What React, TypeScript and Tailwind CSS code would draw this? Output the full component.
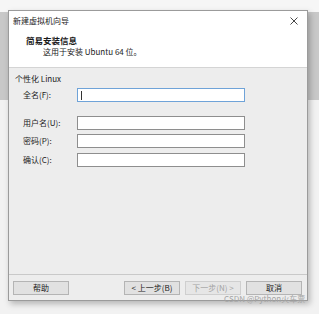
export default function App() {
  const fields = [
    { label: "用户名(U):", mt: "mt-[14px]" },
    { label: "密码(P):", mt: "mt-[4px]" },
    { label: "确认(C):", mt: "mt-[5px]" },
  ];

  return (
    <div
      className="relative w-[319px] h-[314px] overflow-hidden pt-[10px] pl-[8px] bg-[linear-gradient(to_bottom,#f6f6f6_12px,#c8c8c8_12px,#c8c8c8_100px,#f2f2f2_100px)] text-[#1b1b1b]"
      style={{ fontFamily: '"Noto Sans CJK SC", "Noto Sans", sans-serif' }}
    >
      {/* dialog */}
      <div className="w-[300px] h-[291px] flex flex-col border border-[#9b9b9b] bg-[#ededed] shadow-[2px_3px_6px_rgba(0,0,0,0.25)]">
        {/* title + header */}
        <div className="h-[57px] bg-white border-b border-[#d4d4d4] flex flex-col">
          <div className="h-[19px] flex items-center justify-between pl-[4px] pr-[9px]">
            <span className="text-[8px] leading-[10px]">新建虚拟机向导</span>
            <svg width="8" height="8" viewBox="0 0 8 8">
              <path d="M0.5 0.5L7.5 7.5M7.5 0.5L0.5 7.5" stroke="#333" strokeWidth="0.9" />
            </svg>
          </div>
          <div className="pl-[17px] mt-[5px] text-[8.5px] leading-[10px] font-bold">简易安装信息</div>
          <div className="pl-[34px] mt-[2px] text-[8px] leading-[10px]">这用于安装 Ubuntu 64 位。</div>
        </div>

        {/* body */}
        <div className="flex-1 flex flex-col">
          <div className="pl-[6px] mt-[6px] text-[8px] leading-[10px]">个性化 Linux</div>
          <div className="flex items-center mt-[4px]">
            <span className="w-[68px] pl-[14px] text-[8px] leading-[10px]">全名(F):</span>
            <div className="w-[168px] h-[14px] bg-white border border-[#6fa3d8] flex items-center pl-[3px]">
              <div className="w-px h-[9px] bg-[#333]" />
            </div>
          </div>
          {fields.map((f) => (
            <div key={f.label} className={`flex items-center ${f.mt}`}>
              <span className="w-[68px] pl-[14px] text-[8px] leading-[10px]">{f.label}</span>
              <div className="w-[168px] h-[14px] bg-white border border-[#8e8e8e]" />
            </div>
          ))}
        </div>

        {/* footer */}
        <div className="h-[26px] border-t border-[#c9c9c9] pt-[6px] pl-[4px] pr-[5px] flex">
          <button className="w-[56px] h-[14px] bg-[#e1e1e1] border border-[#b4b4b4] text-[8px] leading-[10px]">帮助</button>
          <div className="flex-1" />
          <div className="flex gap-[5px]">
            <button className="w-[56px] h-[14px] bg-[#e1e1e1] border border-[#b4b4b4] text-[8px] leading-[10px]">&lt; 上一步(B)</button>
            <button className="w-[56px] h-[14px] bg-[#e6e6e6] border border-[#cfcfcf] text-[8px] leading-[10px] text-[#a3a3a3]">下一步(N) &gt;</button>
            <button className="w-[56px] h-[14px] bg-[#e1e1e1] border border-[#b4b4b4] text-[8px] leading-[10px]">取消</button>
          </div>
        </div>
      </div>

      {/* watermark */}
      <div className="absolute left-[224px] top-[294px] text-[8px] leading-[10px] text-[#a5a5a5]">CSDN @Python火车票</div>
    </div>
  );
}
